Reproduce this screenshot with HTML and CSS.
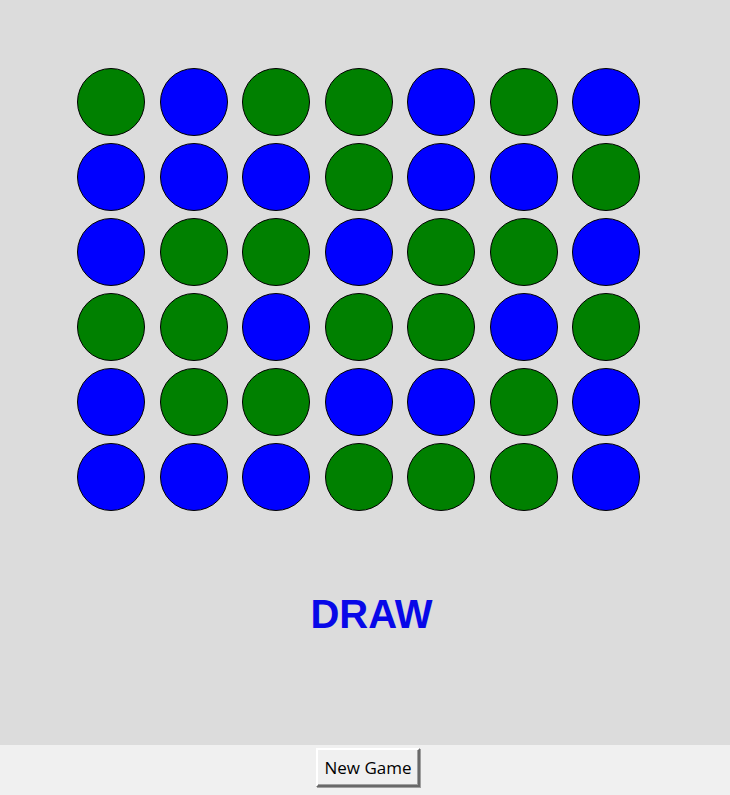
FILE: index.html
```html
<!DOCTYPE html>
<html lang="en">
<head>
    <meta charset="UTF-8">
    <title>Connect Four</title>
    <link rel="stylesheet" href="styles.css">
</head>
<body>
    <div class="board-area">
        <div class="board" id="board"></div>
        <div class="status">DRAW</div>
    </div>
    <div class="controls">
        <button class="button">New Game</button>
    </div>

    <script>
        const ROWS = [
            'GBGGBGB',
            'BBBGBBG',
            'BGGBGGB',
            'GGBGGBG',
            'BGGBBGB',
            'BBBGGGB'
        ];

        const board = document.getElementById('board');
        board.innerHTML = ROWS.map(row => row.split('').map(cell =>
            `<div class="disc ${cell === 'G' ? 'disc-green' : 'disc-blue'}"></div>`
        ).join('')).join('');
    </script>
</body>
</html>
```

FILE: styles.css
```css
body {
    margin: 0;
    height: 795px;
    display: flex;
    flex-direction: column;
    font-family: 'Liberation Sans', Arial, sans-serif;
    background: #f0f0f0;
}

.board-area {
    background: #dcdcdc;
    height: 745px;
    padding: 68px 0 0 77px;
    box-sizing: border-box;
}

.board {
    display: grid;
    grid-template-columns: repeat(7, 68px);
    grid-auto-rows: 68px;
    column-gap: 14.5px;
    row-gap: 7px;
}

.disc {
    border: 1px solid #000;
    border-radius: 50%;
    box-sizing: border-box;
}

.disc-green {
    background: #008000;
}

.disc-blue {
    background: #0000ff;
}

.status {
    margin: 83px 0 0 -64px;
    text-align: center;
    font-size: 40px;
    line-height: 1;
    font-weight: bold;
    color: #0808e8;
}

.controls {
    flex: 1;
    display: flex;
    justify-content: center;
    align-items: flex-start;
    padding: 3px 0 0 6px;
}

.button {
    width: 104px;
    height: 39px;
    background: #f0f0f0;
    border: 2px solid;
    border-color: #ffffff #696969 #696969 #ffffff;
    box-shadow: inset -1px -1px 0 #a0a0a0, 1px 1px 0 #a0a0a0;
    font-family: 'Open Sans', sans-serif;
    font-size: 17px;
    color: #000;
    padding: 0;
}
```
